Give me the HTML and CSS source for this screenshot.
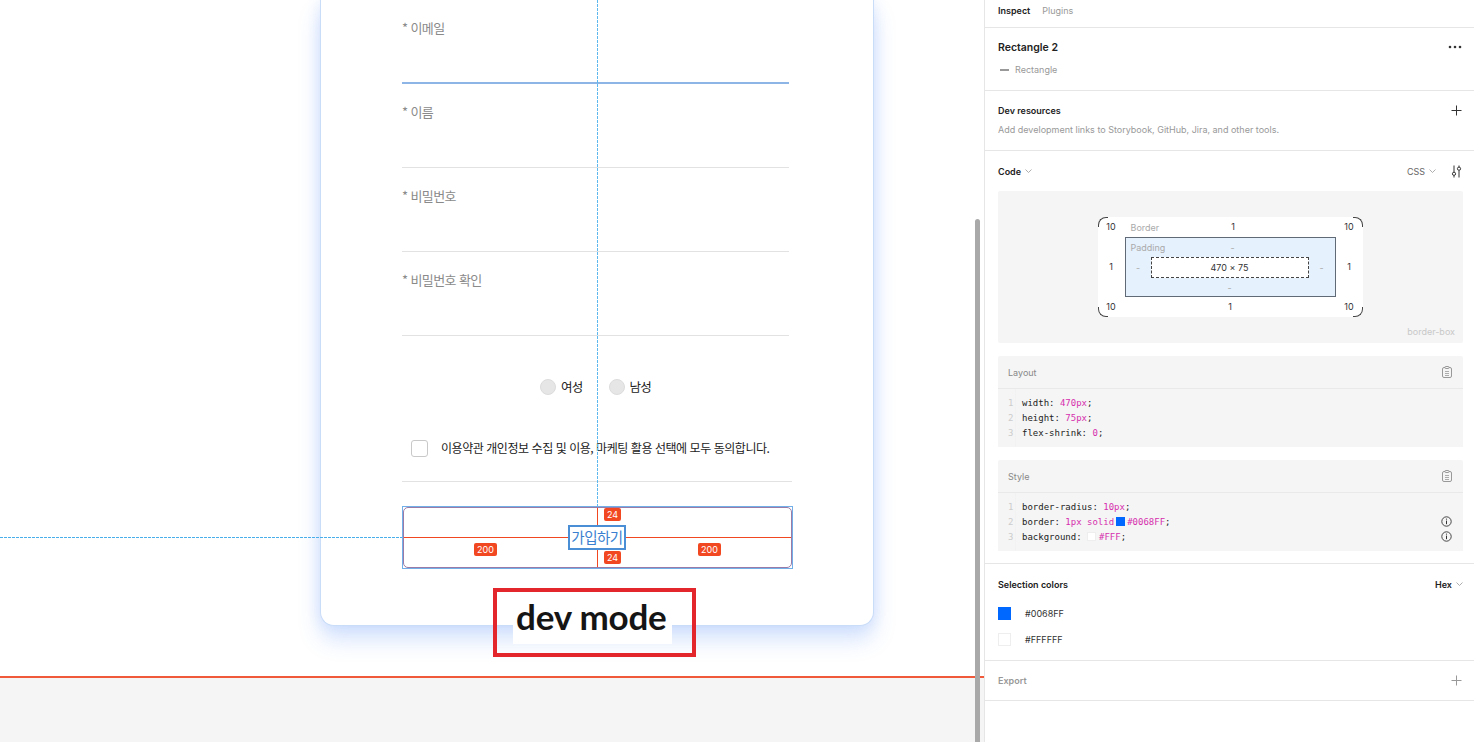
FILE: index.html
```html
<!DOCTYPE html>
<html lang="ko">
<head>
<meta charset="utf-8">
<title>Dev mode</title>
<link rel="stylesheet" href="styles.css">
</head>
<body>
<div class="app">
  <main class="canvas">
    <div class="stage">
      <div class="card">
        <div class="form">
          <div class="field focused"><span class="label">* 이메일</span></div>
          <div class="field"><span class="label">* 이름</span></div>
          <div class="field"><span class="label">* 비밀번호</span></div>
          <div class="field"><span class="label">* 비밀번호 확인</span></div>
          <div class="gender">
            <label class="radio"><span class="dot"></span>여성</label>
            <label class="radio"><span class="dot"></span>남성</label>
          </div>
          <div class="agree">
            <span class="check"></span>
            <span class="agree-text">이용약관 개인정보 수집 및 이용, 마케팅 활용 선택에 모두 동의합니다.</span>
          </div>
          <div class="submit">
            <div class="submit-inner">
              <span class="spacing-line h"></span>
              <span class="spacing-line v"></span>
              <span class="submit-label">가입하기</span>
              <span class="badge b-top">24</span>
              <span class="badge b-bottom">24</span>
              <span class="badge b-left">200</span>
              <span class="badge b-right">200</span>
            </div>
          </div>
        </div>
      </div>
    </div>
    <div class="floor"></div>
    <span class="guide guide-v"></span>
    <span class="guide guide-h"></span>
    <div class="annot"><span class="annot-text">dev mode</span></div>
    <span class="scrollbar"></span>
  </main>

  <aside class="panel">
    <nav class="tabs">
      <span class="tab active">Inspect</span>
      <span class="tab">Plugins</span>
    </nav>

    <section class="sec layer">
      <div class="row">
        <span class="layer-title">Rectangle 2</span>
        <svg class="ico" width="14" height="4" viewBox="0 0 14 4"><circle cx="2" cy="2" r="1.3" fill="#333"/><circle cx="7" cy="2" r="1.3" fill="#333"/><circle cx="12" cy="2" r="1.3" fill="#333"/></svg>
      </div>
      <div class="layer-type"><span class="dash"></span>Rectangle</div>
    </section>

    <section class="sec dev">
      <div class="row">
        <span class="sec-title">Dev resources</span>
        <svg class="ico" width="11" height="11" viewBox="0 0 11 11"><path d="M5.5 0.5v10M0.5 5.5h10" stroke="#333" stroke-width="1"/></svg>
      </div>
      <p class="muted">Add development links to Storybook, GitHub, Jira, and other tools.</p>
    </section>

    <section class="sec code">
      <div class="row">
        <span class="sec-title">Code <svg class="chev" width="7" height="4" viewBox="0 0 7 4"><path d="M0.5 0.5l3 3 3-3" fill="none" stroke="#999" stroke-width="0.8"/></svg></span>
        <span class="code-tools">
          <span class="lang">CSS <svg class="chev" width="7" height="4" viewBox="0 0 7 4"><path d="M0.5 0.5l3 3 3-3" fill="none" stroke="#999" stroke-width="0.8"/></svg></span>
          <svg class="ico" width="11" height="13" viewBox="0 0 11 13"><path d="M3 0.5v6.5M3 10.5v2M8 0.5v1.5M8 5.5v7" stroke="#333" stroke-width="1" fill="none"/><circle cx="3" cy="8.8" r="1.6" fill="none" stroke="#333" stroke-width="1"/><circle cx="8" cy="3.7" r="1.6" fill="none" stroke="#333" stroke-width="1"/></svg>
        </span>
      </div>

      <div class="boxmodel">
        <div class="bm-outer">
          <span class="corner tl"></span><span class="corner tr"></span>
          <span class="corner bl"></span><span class="corner br"></span>
          <span class="bm-num">10</span>
          <div class="bm-edge"><span class="bm-label">Border</span><span class="bm-num">1</span><span></span></div>
          <span class="bm-num">10</span>
          <span class="bm-num">1</span>
          <div class="bm-pad">
            <div class="bm-edge"><span class="bm-label">Padding</span><span class="bm-dash">-</span><span></span></div>
            <span class="bm-dash">-</span>
            <div class="bm-content">470 × 75</div>
            <span class="bm-dash">-</span>
            <span></span>
            <span class="bm-dash">-</span>
            <span></span>
          </div>
          <span class="bm-num">1</span>
          <span class="bm-num">10</span>
          <span class="bm-num">1</span>
          <span class="bm-num">10</span>
        </div>
        <span class="bm-mode">border-box</span>
      </div>

      <div class="codeblock">
        <div class="cb-head">
          <span>Layout</span>
          <svg class="clip" width="10" height="12" viewBox="0 0 10 12"><rect x="0.5" y="1.5" width="9" height="10" rx="1.5" fill="none" stroke="#999"/><rect x="3" y="0.5" width="4" height="2" rx="0.6" fill="#f5f5f5" stroke="#999"/><path d="M3 5.5h4M3 7.5h4M3 9.5h4" stroke="#999" stroke-width="0.8"/></svg>
        </div>
        <div class="cb-body">
          <div class="ln"><span class="n">1</span><span>width: <b>470px</b>;</span></div>
          <div class="ln"><span class="n">2</span><span>height: <b>75px</b>;</span></div>
          <div class="ln"><span class="n">3</span><span>flex-shrink: <b>0</b>;</span></div>
        </div>
      </div>

      <div class="codeblock">
        <div class="cb-head">
          <span>Style</span>
          <svg class="clip" width="10" height="12" viewBox="0 0 10 12"><rect x="0.5" y="1.5" width="9" height="10" rx="1.5" fill="none" stroke="#999"/><rect x="3" y="0.5" width="4" height="2" rx="0.6" fill="#f5f5f5" stroke="#999"/><path d="M3 5.5h4M3 7.5h4M3 9.5h4" stroke="#999" stroke-width="0.8"/></svg>
        </div>
        <div class="cb-body">
          <div class="ln"><span class="n">1</span><span>border-radius: <b>10px</b>;</span></div>
          <div class="ln"><span class="n">2</span><span>border: <b>1px solid</b> <i class="sw blue"></i><b>#0068FF</b>;</span>
            <svg class="info" width="11" height="11" viewBox="0 0 11 11"><circle cx="5.5" cy="5.5" r="4.7" fill="none" stroke="#333" stroke-width="0.9"/><path d="M5.5 4.6v3.6" stroke="#333" stroke-width="1"/><circle cx="5.5" cy="3.1" r="0.6" fill="#333"/></svg></div>
          <div class="ln"><span class="n">3</span><span>background: <i class="sw white"></i><b>#FFF</b>;</span>
            <svg class="info" width="11" height="11" viewBox="0 0 11 11"><circle cx="5.5" cy="5.5" r="4.7" fill="none" stroke="#333" stroke-width="0.9"/><path d="M5.5 4.6v3.6" stroke="#333" stroke-width="1"/><circle cx="5.5" cy="3.1" r="0.6" fill="#333"/></svg></div>
        </div>
      </div>
    </section>

    <section class="sec colors">
      <div class="row">
        <span class="sec-title">Selection colors</span>
        <span class="hex">Hex <svg class="chev" width="7" height="4" viewBox="0 0 7 4"><path d="M0.5 0.5l3 3 3-3" fill="none" stroke="#999" stroke-width="0.8"/></svg></span>
      </div>
      <div class="color-row"><span class="swatch blue"></span><span>#0068FF</span></div>
      <div class="color-row"><span class="swatch white"></span><span>#FFFFFF</span></div>
    </section>

    <section class="sec export">
      <div class="row">
        <span class="sec-title muted-title">Export</span>
        <svg class="ico" width="11" height="11" viewBox="0 0 11 11"><path d="M5.5 0.5v10M0.5 5.5h10" stroke="#999" stroke-width="1"/></svg>
      </div>
    </section>
  </aside>
</div>
</body>
</html>
```

FILE: styles.css
```css
* { box-sizing: border-box; margin: 0; padding: 0; }

html, body {
  width: 1474px;
  height: 742px;
  overflow: hidden;
  background: #fff;
}

body {
  font-family: Inter, "Noto Sans", "Noto Sans CJK KR", sans-serif;
  color: #333;
}

.app {
  display: flex;
  width: 1474px;
  height: 742px;
}

/* ---------------- canvas ---------------- */
.canvas {
  position: relative;
  width: 984px;
  height: 742px;
  display: flex;
  flex-direction: column;
  overflow: hidden;
}

.stage {
  height: 676px;
  background: #fff;
  flex-shrink: 0;
}

.floor {
  flex: 1;
  background: #f5f5f5;
  border-top: 2px solid #f0593a;
}

.card {
  margin-left: 320px;
  width: 554px;
  height: 626px;
  background: #fff;
  border: 1px solid #c9dcf8;
  border-top: none;
  border-radius: 0 0 14px 14px;
  box-shadow: 0 14px 22px rgba(70, 130, 245, 0.22), 0 0 14px rgba(70, 130, 245, 0.14);
  font-family: "Noto Sans CJK KR", "Noto Sans", sans-serif;
}

.form {
  margin-left: 81px;
  width: 391px;
  display: flex;
  flex-direction: column;
}

.field {
  width: 387px;
  height: 84px;
  padding-top: 19px;
  border-bottom: 1px solid #e2e2e2;
}

.field.focused {
  border-bottom: 2px solid #8db6e6;
}

.label {
  display: block;
  font-size: 13px;
  line-height: 18px;
  letter-spacing: -0.6px;
  color: #8a8a8a;
}

.gender {
  width: 387px;
  margin-top: 42px;
  height: 18px;
  display: flex;
  justify-content: center;
  gap: 26px;
}

.radio {
  display: flex;
  align-items: center;
  gap: 5px;
  font-size: 12.5px;
  letter-spacing: -0.8px;
  color: #222;
  line-height: 18px;
}

.dot {
  width: 16px;
  height: 16px;
  border-radius: 50%;
  background: #e6e6e6;
  border: 1px solid #dcdcdc;
}

.agree {
  margin-top: 43px;
  width: 390px;
  padding-left: 9px;
  padding-bottom: 24px;
  border-bottom: 1px solid #e2e2e2;
  display: flex;
  align-items: center;
  gap: 13px;
}

.check {
  width: 17px;
  height: 17px;
  border: 1px solid #c9c9c9;
  border-radius: 3px;
  background: #fff;
  flex-shrink: 0;
}

.agree-text {
  font-size: 12px;
  line-height: 18px;
  letter-spacing: -0.45px;
  color: #222;
  white-space: nowrap;
}

.submit {
  margin-top: 24px;
  width: 391px;
  height: 63px;
  border: 1px solid #72aee8;
}

.submit-inner {
  position: relative;
  width: 100%;
  height: 100%;
  border: 1px solid #9a7aa6;
  border-radius: 5px;
  display: flex;
  align-items: center;
  justify-content: center;
}

.spacing-line {
  position: absolute;
  background: #f24822;
}
.spacing-line.h { left: 0; right: 0; top: 29px; height: 1px; }
.spacing-line.v { top: 0; bottom: 0; left: 193px; width: 1px; }

.submit-label {
  position: relative;
  background: #fff;
  border: 2px solid #4a8ed6;
  padding: 0 1px;
  height: 25px;
  line-height: 20px;
  font-size: 14.5px;
  letter-spacing: -0.5px;
  color: #3a7fd0;
  margin-left: -1px;
}

.badge {
  position: absolute;
  height: 13px;
  padding: 0 3px;
  border-radius: 2px;
  background: #f24822;
  color: #fff;
  font-family: Inter, sans-serif;
  font-size: 9px;
  line-height: 13px;
}
.b-top { left: 200px; top: 0px; }
.b-bottom { left: 200px; top: 43px; }
.b-left { left: 70px; top: 35px; }
.b-right { left: 294px; top: 35px; }

.guide {
  position: absolute;
}
.guide-v {
  left: 597px;
  top: 0;
  height: 506px;
  width: 1px;
  background: repeating-linear-gradient(to bottom, #5cb8ee 0, #5cb8ee 3px, transparent 3px, transparent 4px);
}
.guide-h {
  left: 0;
  top: 537px;
  width: 402px;
  height: 1px;
  background: repeating-linear-gradient(to right, #4aaeea 0, #4aaeea 3px, transparent 3px, transparent 4px);
}

.annot {
  position: absolute;
  left: 493px;
  top: 588px;
  width: 203px;
  height: 69px;
  border: 4px solid #e3262b;
  padding-left: 16px;
}
.annot-text {
  display: inline-block;
  background: #fff;
  font-family: Lato, "Noto Sans", sans-serif;
  font-weight: 700;
  font-size: 35px;
  line-height: 48px;
  letter-spacing: -0.2px;
  color: #151515;
  padding: 0 5px 4px 3px;
}

.scrollbar {
  position: absolute;
  left: 975px;
  top: 219px;
  width: 5px;
  height: 540px;
  border-radius: 3px;
  background: #a9a9a9;
}

/* ---------------- panel ---------------- */
.panel {
  width: 490px;
  height: 742px;
  border-left: 1px solid #e6e6e6;
  background: #fff;
  display: flex;
  flex-direction: column;
  font-size: 9px;
  color: #333;
}

.tabs {
  height: 28px;
  border-bottom: 1px solid #e6e6e6;
  padding: 4px 13px 0;
  display: flex;
  gap: 12px;
  line-height: 13px;
}
.tab { font-size: 9px; color: #999; }
.tab.active { color: #222; font-weight: 600; }

.sec {
  border-bottom: 1px solid #e6e6e6;
  padding: 0 11px 0 13px;
}

.row {
  display: flex;
  justify-content: space-between;
  align-items: center;
}

.layer { height: 63px; padding-top: 12px; }
.layer .row { height: 14px; }
.layer-title { font-size: 10.5px; font-weight: 600; color: #222; }
.ico { margin-right: 1px; }
.layer-type {
  margin-top: 9px;
  display: flex;
  align-items: center;
  gap: 6px;
  color: #999;
  font-size: 9px;
  line-height: 13px;
}
.dash {
  width: 9px;
  height: 2px;
  background: #999;
  margin-left: 2px;
}

.dev { height: 60px; padding-top: 13px; }
.dev .row { height: 12px; }
.sec-title {
  font-size: 9px;
  font-weight: 600;
  color: #222;
  display: inline-flex;
  align-items: center;
  gap: 4px;
}
.muted { color: #999; font-size: 9px; margin-top: 8px; line-height: 12px; }

.code { padding-top: 13px; padding-bottom: 12px; }
.code > .row { height: 14px; margin-bottom: 13px; }
.code-tools { display: flex; align-items: center; gap: 15px; }
.lang, .hex { display: inline-flex; align-items: center; gap: 4px; font-size: 9px; color: #666; }
.hex { color: #222; font-weight: 600; }

.boxmodel {
  height: 152px;
  background: #f5f5f5;
  border-radius: 2px;
  padding-top: 26px;
  padding-right: 8px;
  display: flex;
  flex-direction: column;
  align-items: center;
}

.bm-outer {
  position: relative;
  margin-left: 7px;
  width: 265px;
  height: 100px;
  background: #fff;
  border-radius: 8px;
  display: grid;
  grid-template-columns: 27px 211px 27px;
  grid-template-rows: 20px 60px 20px;
  align-items: center;
  justify-items: center;
  font-size: 9px;
  color: #333;
}

.corner {
  position: absolute;
  width: 10px;
  height: 10px;
  border: 0 solid #444;
}
.corner.tl { left: 0; top: 0; border-left-width: 1px; border-top-width: 1px; border-top-left-radius: 8px; }
.corner.tr { right: 0; top: 0; border-right-width: 1px; border-top-width: 1px; border-top-right-radius: 8px; }
.corner.bl { left: 0; bottom: 0; border-left-width: 1px; border-bottom-width: 1px; border-bottom-left-radius: 8px; }
.corner.br { right: 0; bottom: 0; border-right-width: 1px; border-bottom-width: 1px; border-bottom-right-radius: 8px; }

.bm-edge {
  width: 100%;
  display: grid;
  grid-template-columns: 1fr auto 1fr;
  align-items: center;
  padding-left: 6px;
}
.bm-label { color: #aaa; }
.bm-dash { color: #aaa; }
.bm-num { line-height: 12px; color: #333; }

.bm-pad {
  width: 211px;
  height: 60px;
  background: #e5f1fd;
  border: 1px solid #5f6a76;
  display: grid;
  grid-template-columns: 25px 158px 26px;
  grid-template-rows: 19px 21px 18px;
  align-items: center;
  justify-items: center;
}
.bm-pad .bm-edge { grid-column: 1 / 4; grid-row: 1; padding-left: 5px; }

.bm-content {
  width: 158px;
  height: 21px;
  background: #fff;
  border: 1px dashed #444;
  display: flex;
  align-items: center;
  justify-content: center;
  color: #333;
}

.bm-mode {
  align-self: flex-end;
  margin-top: 9px;
  color: #c8c8c8;
  font-size: 9px;
}

.codeblock {
  margin-top: 13px;
  background: #f5f5f5;
  border-radius: 2px;
}
.cb-head {
  height: 33px;
  padding: 0 11px 0 10px;
  border-bottom: 1px solid #e9e9e9;
  display: flex;
  align-items: center;
  justify-content: space-between;
  color: #888;
  font-size: 9px;
}
.cb-body {
  padding: 6px 0 7px 0;
  background: linear-gradient(to right, #f5f5f5 0, #f5f5f5 17px, #f2f2f2 17px, #f2f2f2 18px, #f5f5f5 18px);
}
.ln {
  display: flex;
  align-items: center;
  height: 15px;
  font-family: "DejaVu Sans Mono", "Liberation Mono", monospace;
  font-size: 9px;
  color: #222;
  padding-right: 11px;
}
.ln .n { width: 24px; padding-left: 10px; color: #ccc; flex-shrink: 0; }
.ln > span:nth-child(2) { flex: 1; display: flex; align-items: center; white-space: pre; }
.ln b { font-weight: 400; color: #d62fae; }
.sw {
  display: inline-block;
  width: 9px;
  height: 9px;
  margin: 0 2px 0 2px;
}
.sw.blue { background: #0068ff; }
.sw.white { background: #fff; border: 1px solid #eee; margin-left: 0; margin-right: 3px; }
.info { flex-shrink: 0; }

.colors { height: 97px; padding-top: 14px; }
.colors .row { height: 12px; margin-bottom: 10px; }
.color-row {
  display: flex;
  align-items: center;
  gap: 14px;
  height: 26px;
  font-size: 9px;
  color: #333;
}
.swatch { width: 13px; height: 13px; }
.swatch.blue { background: #0068ff; }
.swatch.white { background: #fff; border: 1px solid #eee; }

.export { height: 40px; display: flex; flex-direction: column; justify-content: center; }
.muted-title { color: #999; }
```
